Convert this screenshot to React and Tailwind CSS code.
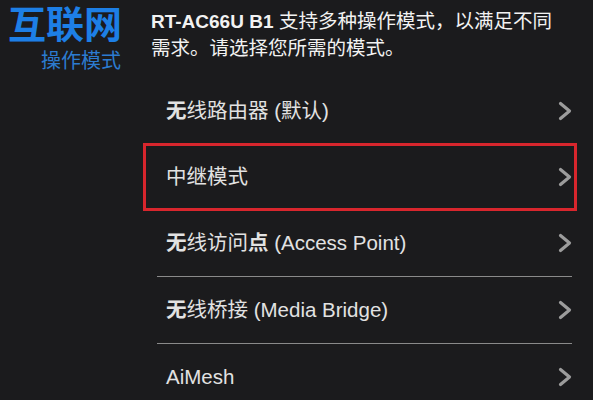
import React from "react";

const font = { fontFamily: '"Liberation Sans", "Noto Sans CJK SC", sans-serif' };

function Chevron() {
  return (
    <svg width="14" height="20" viewBox="0 0 14 20" className="shrink-0">
      <polyline points="2.5,2.5 11.5,10 2.5,17.5" fill="none" stroke="#9c9c9c" strokeWidth="3.2" strokeLinecap="round" strokeLinejoin="round" />
    </svg>
  );
}

function Row({ children, boxed }) {
  return (
    <div className="relative flex h-[66px] items-center justify-between pl-[23px] pr-[5px]">
      <span className="text-[20.5px] text-[#e2e2e2]">{children}</span>
      <Chevron />
      {boxed && (
        <div className="absolute -top-px -bottom-px left-0 right-0 border-[3px] border-[#d8262d]" />
      )}
    </div>
  );
}

function Sep() {
  return <div className="ml-[14px] mr-[5px] h-px bg-[#8a8a8a]" />;
}

export default function App() {
  return (
    <div className="flex h-[400px] w-[593px] overflow-hidden bg-[#1b1b1d]" style={font}>
      <div className="w-[143px] shrink-0 pl-2 pt-[3px]">
        <div className="inline-flex flex-col items-end">
          <div className="text-[38px] font-bold leading-[44px] text-[#1d7fe6]">互联网</div>
          <div className="mt-[2px] pr-[1px] text-[20px] leading-[24px] text-[#2c7bd0]">操作模式</div>
        </div>
      </div>
      <div className="w-[434px] shrink-0">
        <div className="pl-2 pt-[8px] text-[19.5px] leading-[27px] text-[#f2f2f2]">
          <span className="font-bold text-[19px]">RT-AC66U B1</span> 支持多种操作模式，以满足不同
          <br />
          需求。请选择您所需的模式。
        </div>
        <div className="mt-[16px]">
          <Row><span className="font-bold">无</span>线路由器 (默认)</Row>
          <Row boxed>中继模式</Row>
          <Row><span className="font-bold">无</span>线访问<span className="font-bold">点</span> (Access Point)</Row>
          <Sep />
          <Row><span className="font-bold">无</span>线桥接 (Media Bridge)</Row>
          <Sep />
          <Row>AiMesh</Row>
        </div>
      </div>
    </div>
  );
}
